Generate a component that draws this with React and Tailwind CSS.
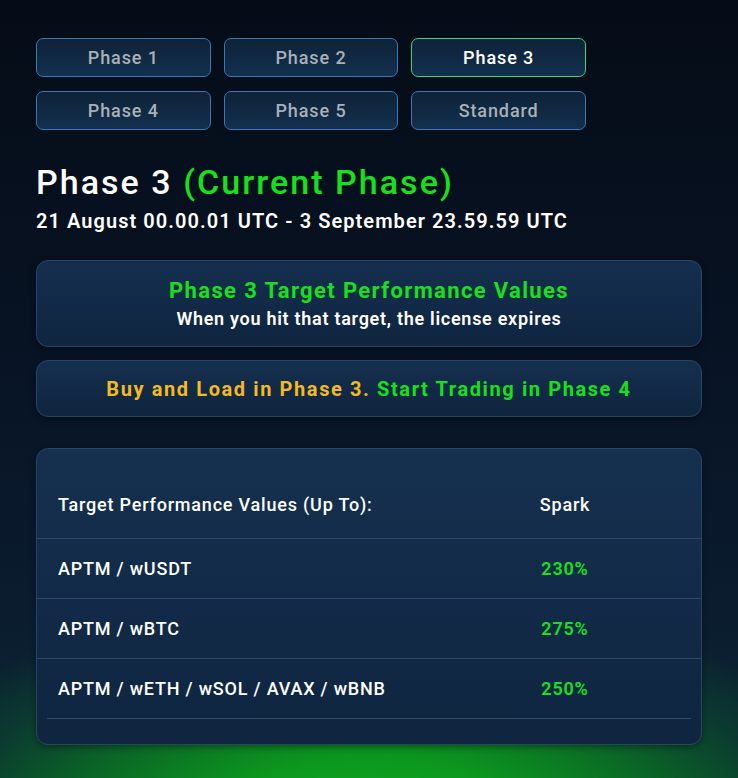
import React from "react";

const phases = [
  { label: "Phase 1", active: false },
  { label: "Phase 2", active: false },
  { label: "Phase 3", active: true },
  { label: "Phase 4", active: false },
  { label: "Phase 5", active: false },
  { label: "Standard", active: false },
];

const rows = [
  { pair: "APTM / wUSDT", value: "230%" },
  { pair: "APTM / wBTC", value: "275%" },
  { pair: "APTM / wETH / wSOL / AVAX / wBNB", value: "250%" },
];

function App() {
  return (
    <div
      className="min-h-screen w-full overflow-hidden bg-[#050c17] font-['Roboto',sans-serif] tracking-[0.05em] text-white"
      style={{
        backgroundImage:
          "radial-gradient(ellipse 520px 230px at 50% 106%, #12b322 0%, #0c961e 30%, #0b6a26 55%, #0b3a30 80%, rgba(8,30,40,0) 100%), linear-gradient(180deg, #050c17 0%, #071222 40%, #0a1b2e 75%, #0b2632 100%)",
      }}
    >
      <div className="px-[36px] pt-[38px] pb-[34px]">
        <div className="grid w-[550px] grid-cols-3 gap-x-[13px] gap-y-[14px]">
          {phases.map((p) => (
            <button
              key={p.label}
              className={
                p.active
                  ? "h-[39px] rounded-[7px] border border-[#3fd47a] bg-gradient-to-b from-[#0e2238] to-[#12304e] text-[18px] font-medium tracking-[0.05em] text-white"
                  : "h-[39px] rounded-[7px] border border-[#3a78b8] bg-gradient-to-b from-[#0e2238] to-[#12304e] text-[18px] font-medium tracking-[0.05em] text-[#a9b0b8]"
              }
            >
              {p.label}
            </button>
          ))}
        </div>

        <h1 className="mt-[32px] text-[34px] leading-[40px] font-medium tracking-[0.06em]">
          Phase 3 <span className="text-[#19e01c]">(Current Phase)</span>
        </h1>
        <p className="mt-[7px] text-[20px] leading-[24px] font-semibold tracking-[0.053em]">
          21 August 00.00.01 UTC - 3 September 23.59.59 UTC
        </p>

        <div className="mt-[27px] flex h-[87px] flex-col items-center justify-center rounded-[12px] border border-[#284664] bg-gradient-to-b from-[#142f4e] to-[#0f2540] shadow-[0_2px_6px_rgba(0,0,0,0.4)]">
          <div className="text-[22px] leading-[28px] font-bold tracking-[0.062em] text-[#19e01c]">
            Phase 3 Target Performance Values
          </div>
          <div className="mt-[3px] text-[18px] leading-[22px] font-semibold tracking-[0.04em]">
            When you hit that target, the license expires
          </div>
        </div>

        <div className="mt-[13px] flex h-[57px] items-center justify-center rounded-[12px] border border-[#284664] bg-gradient-to-b from-[#142f4e] to-[#0f2540] shadow-[0_2px_6px_rgba(0,0,0,0.4)]">
          <span className="text-[20px] font-bold tracking-[0.08em] text-[#f5b922]">
            Buy and Load in Phase 3.{" "}
            <span className="text-[#19e01c]">Start Trading in Phase 4</span>
          </span>
        </div>

        <div className="mt-[31px] rounded-[12px] border border-[#284664] bg-gradient-to-b from-[#15304f] to-[#0f2540] pt-[22px] pb-[25px] shadow-[0_2px_6px_rgba(0,0,0,0.4)]">
          <div className="grid h-[68px] grid-cols-[1fr_252px] items-center border-b border-[#2a4a6a] px-[10px] text-[18px] font-medium">
            <div className="pl-[11px]">Target Performance Values (Up To):</div>
            <div className="text-center">Spark</div>
          </div>
          {rows.map((r, i) => (
            <div
              key={r.pair}
              className={
                i === rows.length - 1
                  ? "mx-[10px] grid h-[60px] grid-cols-[1fr_252px] items-center border-b border-[#2a4a6a] text-[18px] font-medium"
                  : "grid h-[60px] grid-cols-[1fr_252px] items-center border-b border-[#2a4a6a] px-[10px] text-[18px] font-medium"
              }
            >
              <div className="pl-[11px]">{r.pair}</div>
              <div className="text-center font-semibold text-[#19e01c]">{r.value}</div>
            </div>
          ))}
        </div>
      </div>
    </div>
  );
}

export default App;
